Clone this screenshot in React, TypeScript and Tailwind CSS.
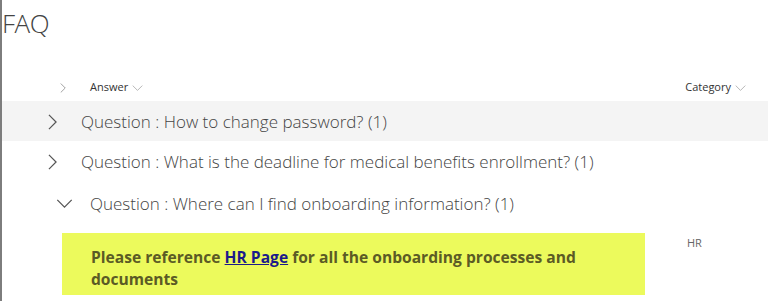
const Right = ({ className }: { className: string }) => (
  <svg viewBox="0 0 10 18" className={className} fill="none" stroke="currentColor" strokeWidth="1.4">
    <path d="M1 1l8 8-8 8" />
  </svg>
);

const Down = ({ className }: { className: string }) => (
  <svg viewBox="0 0 18 10" className={className} fill="none" stroke="currentColor" strokeWidth="1.4">
    <path d="M1 1l8 8 8-8" />
  </svg>
);

const questions = [
  'How to change password?',
  'What is the deadline for medical benefits enrollment?',
];

export default function App() {
  return (
    <div className="h-[301px] overflow-hidden border-l-2 border-[#7d7d7d] bg-white font-['Open_Sans',sans-serif]">
      <h1 className="pt-[6px] text-[26px] font-light leading-[35px] tracking-[-0.5px] text-[#444]">FAQ</h1>

      <div className="mt-[33px] flex h-[27px] items-center text-[11px] text-[#333]">
        <Right className="ml-[58px] h-[10px] w-[6px] text-[#888]" />
        <span className="ml-[24px]">Answer</span>
        <Down className="ml-[4px] h-[6px] w-[11px] text-[#aaa]" />
        <span className="ml-auto">Category</span>
        <Down className="ml-[4px] mr-[22px] h-[6px] w-[11px] text-[#aaa]" />
      </div>

      {questions.map((q, i) => (
        <div
          key={q}
          className={`flex h-[40px] items-center pt-[1px] text-[17px] font-light text-[#444] ${i === 0 ? 'bg-[#f4f4f4]' : ''}`}
        >
          <Right className="ml-[46px] h-[16px] w-[9px] text-[#555]" />
          <span className="ml-[24px]">Question : {q} (1)</span>
        </div>
      ))}

      <div className="flex h-[42px] items-center pt-[3px] text-[17px] font-light text-[#444]">
        <Down className="ml-[54px] h-[9px] w-[17px] text-[#555]" />
        <span className="ml-[17px]">Question : Where can I find onboarding information? (1)</span>
      </div>

      <div className="mt-[10px] flex items-start">
        <div className="ml-[60px] h-[62px] w-[583px] bg-[#ecfa5c] pl-[29px] pr-[50px] pt-[13px] text-[15.6px] font-bold leading-[22px] text-[#5b5b25]">
          Please reference{' '}
          <a href="#" className="text-[#1b1b8a] underline">
            HR Page
          </a>{' '}
          for all the onboarding processes and documents
        </div>
        <span className="ml-[42px] pt-[2px] text-[11px] text-[#666]">HR</span>
      </div>
    </div>
  );
}
